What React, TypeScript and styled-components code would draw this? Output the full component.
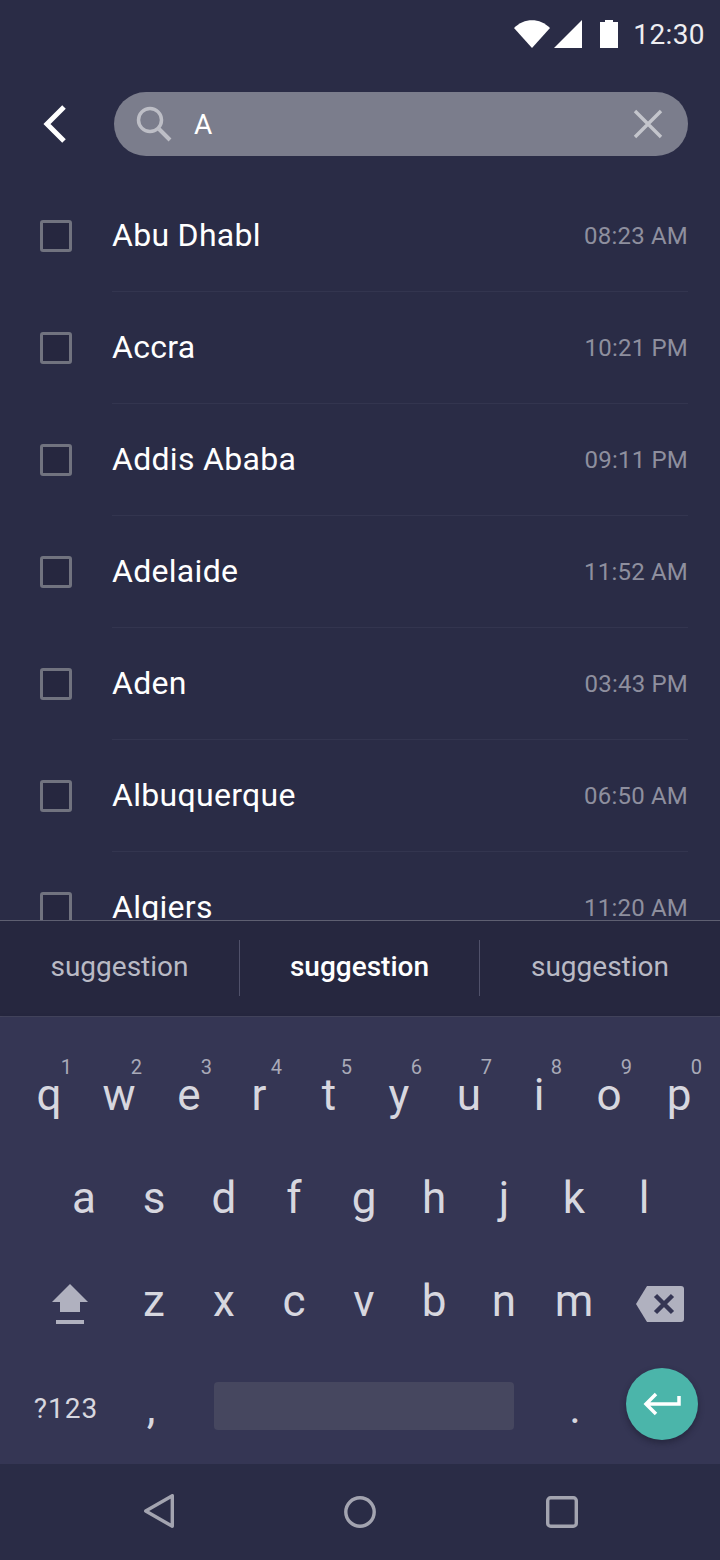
import React from 'react';
import styled, { createGlobalStyle } from 'styled-components';

const GlobalStyle = createGlobalStyle`
  html, body {
    margin: 0;
    padding: 0;
    background: #2a2c46;
  }
  * {
    box-sizing: border-box;
  }
`;

const Screen = styled.div`
  width: 720px;
  height: 1560px;
  display: flex;
  flex-direction: column;
  overflow: hidden;
  background: #2a2c46;
  font-family: Roboto, sans-serif;
  color: #fff;
`;

const StatusBar = styled.div`
  height: 68px;
  flex: none;
  display: flex;
  align-items: center;
  justify-content: flex-end;
  padding-right: 15px;
`;

const StatusIcon = styled.svg<{ $gap?: number }>`
  display: block;
  flex: none;
  margin-left: ${(p) => p.$gap ?? 0}px;
`;

const Clock = styled.span`
  margin-left: 15px;
  font-size: 28px;
  letter-spacing: 0.4px;
  color: #eeeef1;
`;

const SearchRow = styled.div`
  flex: none;
  display: flex;
  align-items: center;
  margin-top: 24px;
  padding: 0 32px 0 40px;
  gap: 44px;
`;

const BackButton = styled.svg`
  display: block;
  flex: none;
  width: 30px;
  height: 40px;
`;

const SearchField = styled.div`
  flex: 1;
  height: 64px;
  border-radius: 32px;
  background: #7b7d8c;
  display: flex;
  align-items: center;
  padding: 0 25px 0 22px;
`;

const SearchText = styled.span`
  flex: 1;
  margin-left: 22px;
  font-size: 28px;
  color: #fff;
`;

const List = styled.div`
  flex: 1;
  min-height: 0;
  overflow: hidden;
  margin-top: 24px;
  display: flex;
  flex-direction: column;
`;

const Row = styled.div`
  flex: none;
  height: 112px;
  display: flex;
  align-items: center;
  padding: 0 32px 0 40px;
`;

const Checkbox = styled.span`
  flex: none;
  width: 32px;
  height: 32px;
  border: 3px solid #71737f;
  border-radius: 3px;
  background: #26273f;
`;

const RowBody = styled.div<{ $last: boolean }>`
  flex: 1;
  align-self: stretch;
  margin-left: 40px;
  display: flex;
  align-items: center;
  justify-content: space-between;
  border-bottom: 1px solid ${(p) => (p.$last ? 'transparent' : '#33354f')};
`;

const City = styled.span`
  font-size: 32px;
  letter-spacing: 0.3px;
  color: #fff;
  margin-top: -2px;
`;

const Time = styled.span`
  font-size: 24px;
  letter-spacing: 0.2px;
  color: #8e8f9e;
`;

const SuggestionBar = styled.div`
  flex: none;
  height: 97px;
  display: flex;
  align-items: center;
  padding-bottom: 2px;
  background: #26273f;
  border-top: 1px solid #5e5f71;
  border-bottom: 1px solid #45465f;
`;

const Suggestion = styled.div<{ $active?: boolean }>`
  flex: none;
  width: 240px;
  height: 56px;
  padding-bottom: 2px;
  display: flex;
  align-items: center;
  justify-content: center;
  font-size: 28px;
  font-weight: ${(p) => (p.$active ? 500 : 400)};
  color: ${(p) => (p.$active ? '#fff' : '#b9bac5')};
  &:first-child {
    width: 239px;
  }
  &:last-child {
    width: 241px;
  }
  & + & {
    border-left: 1px solid #50516a;
  }
`;

const Keyboard = styled.div`
  flex: none;
  height: 447px;
  background: #353654;
  padding-top: 27px;
  display: flex;
  flex-direction: column;
  box-shadow: 0 2px 4px rgba(20, 20, 36, 0.6);
`;

const KeyRow = styled.div<{ $inset: number }>`
  flex: none;
  height: 103px;
  display: flex;
  padding-left: ${(p) => p.$inset}px;
`;

const Key = styled.div<{ $width?: number; $gap?: number; $drop?: number }>`
  position: relative;
  flex: none;
  width: ${(p) => p.$width ?? 70}px;
  margin-left: ${(p) => p.$gap ?? 0}px;
  padding-top: ${(p) => p.$drop ?? 0}px;
  padding-bottom: 2px;
  height: 100%;
  display: flex;
  align-items: center;
  justify-content: center;
  font-size: 44px;
  color: #d7d7df;
`;

const Hint = styled.span`
  position: absolute;
  top: 11px;
  right: 12px;
  font-size: 20px;
  color: #a9aab8;
`;

const SymbolsKey = styled(Key)`
  font-size: 28px;
  letter-spacing: 1px;
`;

const SpaceBar = styled.div`
  flex: none;
  width: 300px;
  height: 48px;
  margin: 3px 0 0 30px;
  align-self: center;
  border-radius: 4px;
  background: #46475f;
`;

const EnterButton = styled.div`
  flex: none;
  width: 72px;
  height: 72px;
  margin-bottom: 1px;
  align-self: center;
  border-radius: 50%;
  background: #4bb5aa;
  display: flex;
  align-items: center;
  justify-content: center;
  box-shadow: 0 3px 6px rgba(20, 20, 36, 0.45);
`;

const NavBar = styled.div`
  flex: none;
  height: 96px;
  display: flex;
  align-items: center;
  justify-content: center;
  padding-left: 2px;
  gap: 170px;
  background: #2a2c46;
`;

const CITIES = [
  ['Abu Dhabl', '08:23 AM'],
  ['Accra', '10:21 PM'],
  ['Addis Ababa', '09:11 PM'],
  ['Adelaide', '11:52 AM'],
  ['Aden', '03:43 PM'],
  ['Albuquerque', '06:50 AM'],
  ['Algiers', '11:20 AM'],
];

const ROW1 = [
  ['q', '1'],
  ['w', '2'],
  ['e', '3'],
  ['r', '4'],
  ['t', '5'],
  ['y', '6'],
  ['u', '7'],
  ['i', '8'],
  ['o', '9'],
  ['p', '0'],
];
const ROW2 = ['a', 's', 'd', 'f', 'g', 'h', 'j', 'k', 'l'];
const ROW3 = ['z', 'x', 'c', 'v', 'b', 'n', 'm'];

export default function App() {
  return (
    <Screen>
      <GlobalStyle />
      <StatusBar>
        <StatusIcon width="36" height="28" viewBox="0 0 36 28">
          <path d="M0 8 C10 -2.5 26 -2.5 36 8 L18 28 Z" fill="#fff" />
        </StatusIcon>
        <StatusIcon $gap={4} width="28" height="28" viewBox="0 0 28 28">
          <path d="M0 28 L28 0 V28 Z" fill="#fff" />
        </StatusIcon>
        <StatusIcon $gap={18} width="18" height="28" viewBox="0 0 18 28">
          <path d="M0 2 H5 V0 H13 V2 H18 V28 H0 Z" fill="#fff" />
        </StatusIcon>
        <Clock>12:30</Clock>
      </StatusBar>

      <SearchRow>
        <BackButton viewBox="0 0 30 40">
          <path d="M24 3 L7 20 L24 37" fill="none" stroke="#fff" strokeWidth="5" />
        </BackButton>
        <SearchField>
          <svg width="36" height="36" viewBox="0 0 36 36" style={{ flex: 'none' }}>
            <circle cx="14" cy="14" r="11.5" fill="none" stroke="#bdbec6" strokeWidth="3.5" />
            <path d="M23 23 L34 34" stroke="#bdbec6" strokeWidth="4" />
          </svg>
          <SearchText>A</SearchText>
          <svg width="30" height="30" viewBox="0 0 30 30" style={{ flex: 'none' }}>
            <path d="M2 2 L28 28 M28 2 L2 28" stroke="#c4c5cc" strokeWidth="3.4" />
          </svg>
        </SearchField>
      </SearchRow>

      <List>
        {CITIES.map(([city, time], i) => (
          <Row key={city}>
            <Checkbox />
            <RowBody $last={i === CITIES.length - 1}>
              <City>{city}</City>
              <Time>{time}</Time>
            </RowBody>
          </Row>
        ))}
      </List>

      <SuggestionBar>
        <Suggestion>suggestion</Suggestion>
        <Suggestion $active>suggestion</Suggestion>
        <Suggestion>suggestion</Suggestion>
      </SuggestionBar>

      <Keyboard>
        <KeyRow $inset={14}>
          {ROW1.map(([k, n]) => (
            <Key key={k}>
              {k}
              <Hint>{n}</Hint>
            </Key>
          ))}
        </KeyRow>
        <KeyRow $inset={49}>
          {ROW2.map((k) => (
            <Key key={k}>{k}</Key>
          ))}
        </KeyRow>
        <KeyRow $inset={21}>
          <Key $width={98} $drop={7}>
            <svg width="36" height="40" viewBox="0 0 36 40">
              <path d="M18 0 L36 18 H28 V28 H8 V18 H0 Z" fill="#b0b1bf" />
              <rect x="4" y="36" width="28" height="4" fill="#b0b1bf" />
            </svg>
          </Key>
          {ROW3.map((k) => (
            <Key key={k}>{k}</Key>
          ))}
          <Key $width={102} $drop={7}>
            <svg width="48" height="36" viewBox="0 0 48 36">
              <path
                d="M11 0 H45 Q48 0 48 3 V33 Q48 36 45 36 H11 L0 18 Z"
                fill="#b0b1bf"
              />
              <path d="M19.5 9.5 L36.5 26.5 M36.5 9.5 L19.5 26.5" stroke="#353654" strokeWidth="4.5" />
            </svg>
          </Key>
        </KeyRow>
        <KeyRow $inset={14}>
          <SymbolsKey $width={104} $drop={9}>?123</SymbolsKey>
          <Key $width={66} $drop={9}>,</Key>
          <SpaceBar />
          <Key $width={102} $gap={10} $drop={9}>.</Key>
          <EnterButton>
            <svg width="38" height="24" viewBox="0 0 38 24">
              <path
                d="M36 4 V12 H4 M13 2 L3 12 L13 22"
                fill="none"
                stroke="#fff"
                strokeWidth="3.5"
              />
            </svg>
          </EnterButton>
        </KeyRow>
      </Keyboard>

      <NavBar>
        <svg width="30" height="36" viewBox="0 0 30 36">
          <path
            d="M28.3 1.7 V32.3 L1.7 17 Z"
            fill="none"
            stroke="#a3a4b0"
            strokeWidth="3.4"
            strokeLinejoin="round"
          />
        </svg>
        <svg width="32" height="32" viewBox="0 0 32 32">
          <circle cx="16" cy="16" r="14.2" fill="none" stroke="#a3a4b0" strokeWidth="3.4" />
        </svg>
        <svg width="32" height="32" viewBox="0 0 32 32">
          <rect
            x="1.7"
            y="1.7"
            width="28.6"
            height="28.6"
            rx="3"
            fill="none"
            stroke="#a3a4b0"
            strokeWidth="3.4"
          />
        </svg>
      </NavBar>
    </Screen>
  );
}
